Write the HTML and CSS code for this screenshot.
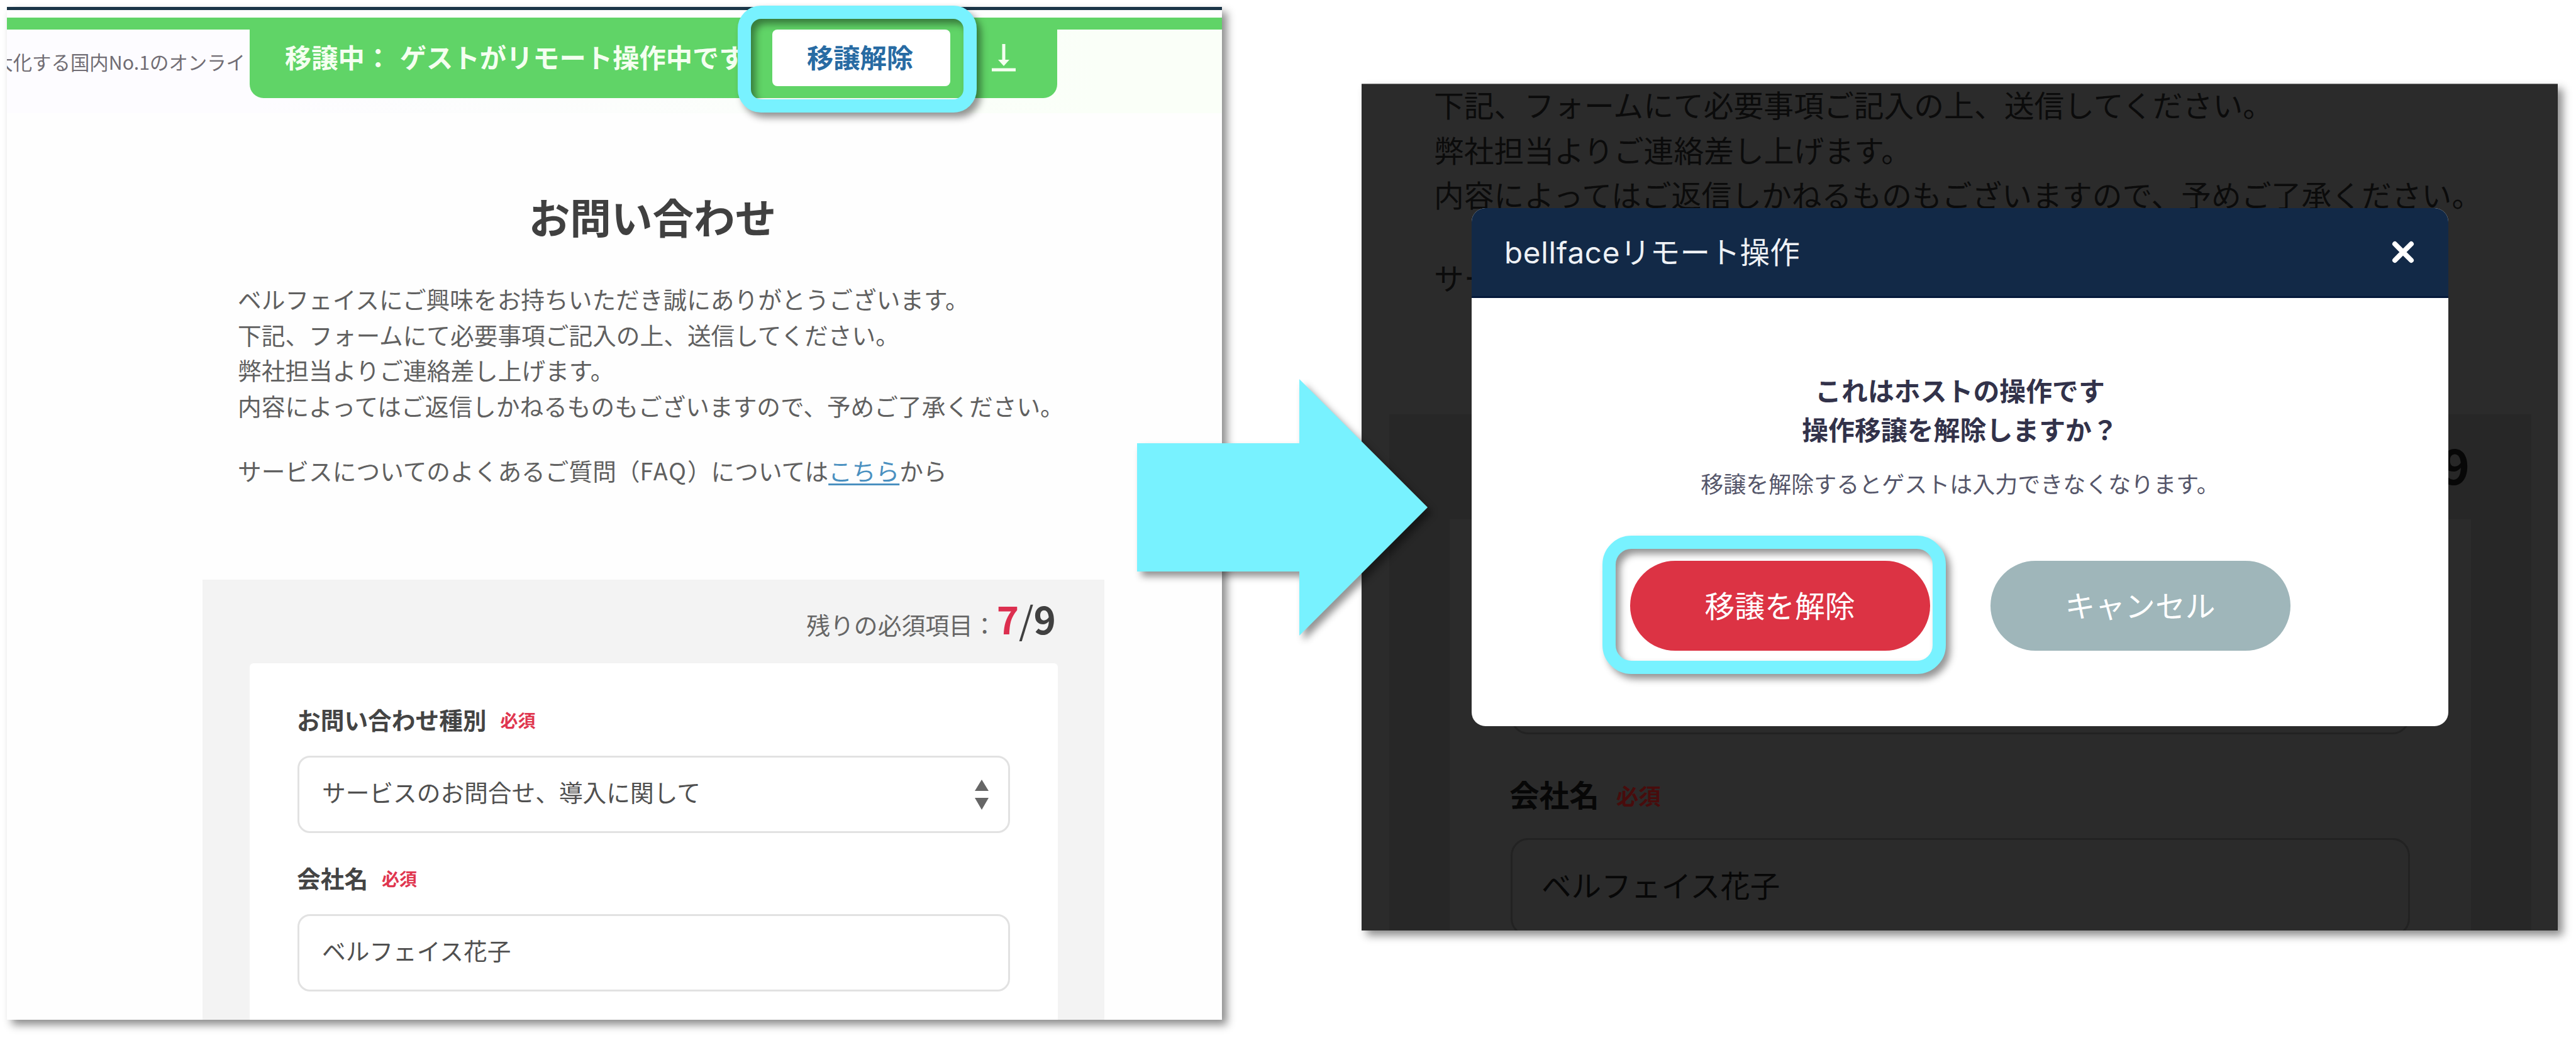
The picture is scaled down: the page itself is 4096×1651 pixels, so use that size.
FILE: index.html
```
<!DOCTYPE html>
<html lang="ja">
  <head>
    <meta charset="UTF-8" />
    <meta name="viewport" content="width=device-width, initial-scale=1.0" />
    <title>bellface リモート操作 - 移譲解除</title>
    <link rel="stylesheet" href="styles.css">
  </head>
  <body>
    <main class="stage">
      <!-- Step 1: shared contact page -->
      <section class="screen">
        <div class="page">
          <div class="topline"></div>
          <header class="page-header">
            <div class="tagline"><span>大化する国内No.1のオンライ</span></div>
            <div class="control-tab">
              <span class="status">移譲中： ゲストがリモート操作中です</span>
              <button class="release">移譲解除</button>
              <svg class="download" viewBox="0 0 38 44">
                <path d="M19 0V28" stroke="#f4fff0" stroke-width="5" />
                <path d="M10 25H28L19 35Z" fill="#f4fff0" />
                <path d="M0 41H38" stroke="#f4fff0" stroke-width="5" />
              </svg>
            </div>
          </header>
          <h1>お問い合わせ</h1>
          <div class="lead">
            <p>
              ベルフェイスにご興味をお持ちいただき誠にありがとうございます。<br />
              下記、フォームにて必要事項ご記入の上、送信してください。<br />
              弊社担当よりご連絡差し上げます。<br />
              内容によってはご返信しかねるものもございますので、予めご了承ください。
            </p>
            <p class="faq">サービスについてのよくあるご質問（<span class="latin">FAQ</span>）については<a href="#">こちら</a>から</p>
          </div>
          <div class="form">
            <div class="remaining">残りの必須項目：<b class="now">7</b><span class="slash">/</span><b>9</b></div>
            <div class="card">
              <div class="label">お問い合わせ種別<em>必須</em></div>
              <div class="field">
                <span>サービスのお問合せ、導入に関して</span>
                <svg class="sort" viewBox="0 0 22 48">
                  <path d="M11 0L22 18H0ZM0 29H22L11 48Z" fill="#666" />
                </svg>
              </div>
              <div class="label second">会社名<em>必須</em></div>
              <div class="field">ベルフェイス花子</div>
            </div>
          </div>
        </div>
        <div class="highlight highlight-release"></div>
      </section>

      <!-- Step 2: confirm dialog over the dimmed page -->
      <section class="screen-dark">
        <div class="dim-page">
          <div class="dim-lead">
            <p>
              下記、フォームにて必要事項ご記入の上、送信してください。<br />
              弊社担当よりご連絡差し上げます。<br />
              内容によってはご返信しかねるものもございますので、予めご了承ください。
            </p>
            <p class="dim-faq">サー</p>
          </div>
          <div class="dim-form">
            <div class="dim-remaining">9</div>
            <div class="dim-card">
              <div class="dim-field first"></div>
              <div class="dim-label">会社名<em>必須</em></div>
              <div class="dim-field">ベルフェイス花子</div>
            </div>
          </div>
        </div>
        <div class="modal">
          <div class="modal-header">
            <span class="modal-title"><span class="brand">bellface</span>リモート操作</span>
            <svg class="close" viewBox="0 0 36 36">
              <path d="M5 5L31 31M31 5L5 31" stroke="#fff" stroke-width="8" stroke-linecap="round" />
            </svg>
          </div>
          <div class="modal-body">
            <p class="question">これはホストの操作です<br />操作移譲を解除しますか？</p>
            <p class="note">移譲を解除するとゲストは入力できなくなります。</p>
            <div class="buttons">
              <button class="btn danger">移譲を解除</button>
              <button class="btn cancel">キャンセル</button>
            </div>
          </div>
        </div>
        <div class="highlight highlight-confirm"></div>
      </section>

      <svg class="arrow" viewBox="0 0 462 408">
        <path d="M0 102H258V0L462 204L258 408V306H0Z" fill="#78f2ff" />
      </svg>
    </main>
  </body>
</html>
```

FILE: styles.css
```
* {
  box-sizing: border-box;
}
body {
  margin: 0;
  background: #fff;
  font-family: "Noto Sans CJK JP", sans-serif;
}
p,
h1 {
  margin: 0;
}
em {
  font-style: normal;
}
button {
  border: 0;
  padding: 0;
  font-family: inherit;
}
svg {
  display: block;
  fill: none;
}
.stage {
  position: relative;
  display: flex;
  align-items: flex-start;
  gap: 222px;
  width: 4096px;
  height: 1651px;
  padding: 11px 0 0 11px;
  overflow: hidden;
}

/* left screen */
.screen {
  position: relative;
  width: 1932px;
  height: 1611px;
  box-shadow: 8px 8px 13px rgba(0, 0, 0, 0.45);
}
.page {
  height: 100%;
  overflow: hidden;
  background: #fefefe;
}
.topline {
  height: 5px;
  margin-bottom: 12px;
  background: #1b3547;
}
.page-header {
  display: flex;
  height: 152px;
  border-top: 19px solid #60d467;
  background: linear-gradient(90deg, #fdfcff 20%, #fafff8 90%);
}
.tagline {
  display: flex;
  justify-content: flex-end;
  width: 386px;
  padding-right: 7px;
  overflow: hidden;
  color: #716d74;
  font-size: 30.4px;
  line-height: 102px;
  white-space: nowrap;
}
.control-tab {
  display: flex;
  align-items: flex-start;
  width: 1284px;
  height: 109px;
  padding-left: 56px;
  border-radius: 0 0 22px 22px;
  background: #60d467;
}
.status {
  width: 775px;
  color: #f4fff0;
  font-size: 42.3px;
  font-weight: 700;
  line-height: 86px;
  white-space: nowrap;
  word-spacing: 4px;
}
.release {
  width: 283px;
  height: 90px;
  padding: 0 4px 4px 0;
  border-radius: 8px;
  background: #fff;
  color: #286ba3;
  font-size: 42.3px;
  font-weight: 700;
  line-height: 86px;
}
.download {
  width: 38px;
  height: 44px;
  margin: 23px 0 0 66px;
}
h1 {
  width: 2053px;
  margin-top: 124px;
  color: #404040;
  font-size: 65.6px;
  font-weight: 700;
  line-height: 80px;
  text-align: center;
}
.lead {
  margin: 63px 0 0 367px;
  color: #606060;
  font-size: 37.7px;
  line-height: 56.6px;
}
.faq {
  margin-top: 47px;
}
.latin {
  letter-spacing: 0.05em;
}
.lead a {
  color: #4a90c0;
  text-decoration-thickness: 3px;
  text-underline-offset: 5px;
}
.form {
  width: 1434px;
  height: 720px;
  margin: 145px 0 0 311px;
  padding: 0 74px 0 75px;
  background: #f3f3f3;
}
.remaining {
  display: flex;
  align-items: baseline;
  justify-content: flex-end;
  height: 133px;
  padding: 19px 3px 0 0;
  color: #666;
  font-size: 37.8px;
  line-height: 84px;
}
.remaining b,
.slash {
  color: #404040;
  font-size: 60px;
}
.remaining .now {
  color: #dc2f4f;
}
.card {
  height: 600px;
  padding: 61px 76px 0;
  border-radius: 6px;
  background: #fff;
}
.label {
  display: flex;
  align-items: center;
  gap: 22px;
  height: 56px;
  margin-left: -1px;
  color: #444;
  font-size: 37.7px;
  font-weight: 700;
}
.label em {
  padding-top: 3px;
  color: #e0364f;
  font-size: 28px;
}
.label.second {
  margin-top: 43px;
}
.field {
  display: flex;
  align-items: center;
  justify-content: space-between;
  height: 123px;
  margin-top: 30px;
  padding: 0 31px 9px 36px;
  border: 3px solid #e2e2e2;
  border-radius: 20px;
  color: #505050;
  font-size: 37.7px;
}
.sort {
  width: 22px;
  height: 48px;
  margin-top: 10px;
}

/* callout frames */
.highlight {
  position: absolute;
  border: 21px solid #78f2ff;
  filter: drop-shadow(7px 8px 6px rgba(0, 0, 0, 0.42));
}
.highlight-release {
  left: 1162px;
  top: -2px;
  width: 380px;
  height: 170px;
  border-radius: 37px;
}
.highlight-confirm {
  left: 383px;
  top: 719px;
  width: 546px;
  height: 220px;
  border-radius: 46px;
}
.arrow {
  position: absolute;
  left: 1808px;
  top: 603px;
  width: 462px;
  height: 408px;
  overflow: visible;
  filter: drop-shadow(7px 8px 6px rgba(0, 0, 0, 0.42));
}

/* right screen */
.screen-dark {
  position: relative;
  width: 1902px;
  height: 1347px;
  margin-top: 122px;
  box-shadow: 8px 8px 13px rgba(0, 0, 0, 0.45);
}
.dim-page {
  height: 100%;
  overflow: hidden;
  border-top: 1px solid #777;
  background: #2b2b2b;
  color: #0b0b0b;
}
.dim-lead {
  display: flow-root;
  height: 525px;
  padding-left: 115px;
  font-size: 47.8px;
  line-height: 71.7px;
  white-space: nowrap;
}
.dim-lead p:first-child {
  margin-top: -4px;
}
.dim-lead .dim-faq {
  margin-top: 60px;
}
.dim-form {
  width: 1816px;
  height: 900px;
  margin-left: 44px;
  padding: 0 96px;
  background: #272727;
}
.dim-remaining {
  height: 167px;
  padding: 19px 2px 0 0;
  color: #070707;
  font-size: 76px;
  font-weight: 700;
  line-height: 120px;
  text-align: right;
}
.dim-card {
  height: 740px;
  padding: 186px 97px 0;
  background: #2b2b2b;
}
.dim-field {
  display: flex;
  align-items: center;
  height: 156px;
  margin-top: 36px;
  padding: 0 0 9px 46px;
  border: 3px solid #222;
  border-radius: 28px;
  color: #070707;
  font-size: 47.6px;
}
.dim-field.first {
  margin-top: 0;
}
.dim-label {
  display: flex;
  align-items: center;
  gap: 27px;
  height: 70px;
  margin: 59px 0 0 -2px;
  color: #070707;
  font-size: 47.6px;
  font-weight: 700;
}
.dim-label em {
  padding-top: 4px;
  color: #480c0c;
  font-size: 35.5px;
}

.modal {
  position: absolute;
  left: 175px;
  top: 198px;
  width: 1553px;
  height: 824px;
  overflow: hidden;
  border-radius: 22px;
  background: #fff;
}
.modal-header {
  display: flex;
  align-items: center;
  justify-content: space-between;
  height: 143px;
  padding: 0 54px 0 52px;
  border-bottom: 3px solid #04183a;
  background: #122947;
  color: #eef1f5;
  font-size: 47.6px;
}
.modal-title {
  padding-bottom: 5px;
}
.brand {
  font-family: Inter, sans-serif;
  letter-spacing: 0.015em;
}
.close {
  width: 36px;
  height: 36px;
}
.modal-body {
  padding-top: 115px;
  text-align: center;
}
.question {
  color: #32324a;
  font-size: 41.9px;
  font-weight: 700;
  line-height: 62.3px;
}
.note {
  margin-top: 24px;
  color: #55566a;
  font-size: 36px;
  line-height: 60px;
}
.buttons {
  display: flex;
  justify-content: center;
  gap: 96px;
  margin-top: 94px;
}
.btn {
  width: 477px;
  height: 143px;
  padding-bottom: 4px;
  border-radius: 72px;
  color: #fff;
  font-size: 47.8px;
  line-height: 139px;
}
.danger {
  background: #dc3344;
}
.cancel {
  background: #9fb6ba;
}
```
